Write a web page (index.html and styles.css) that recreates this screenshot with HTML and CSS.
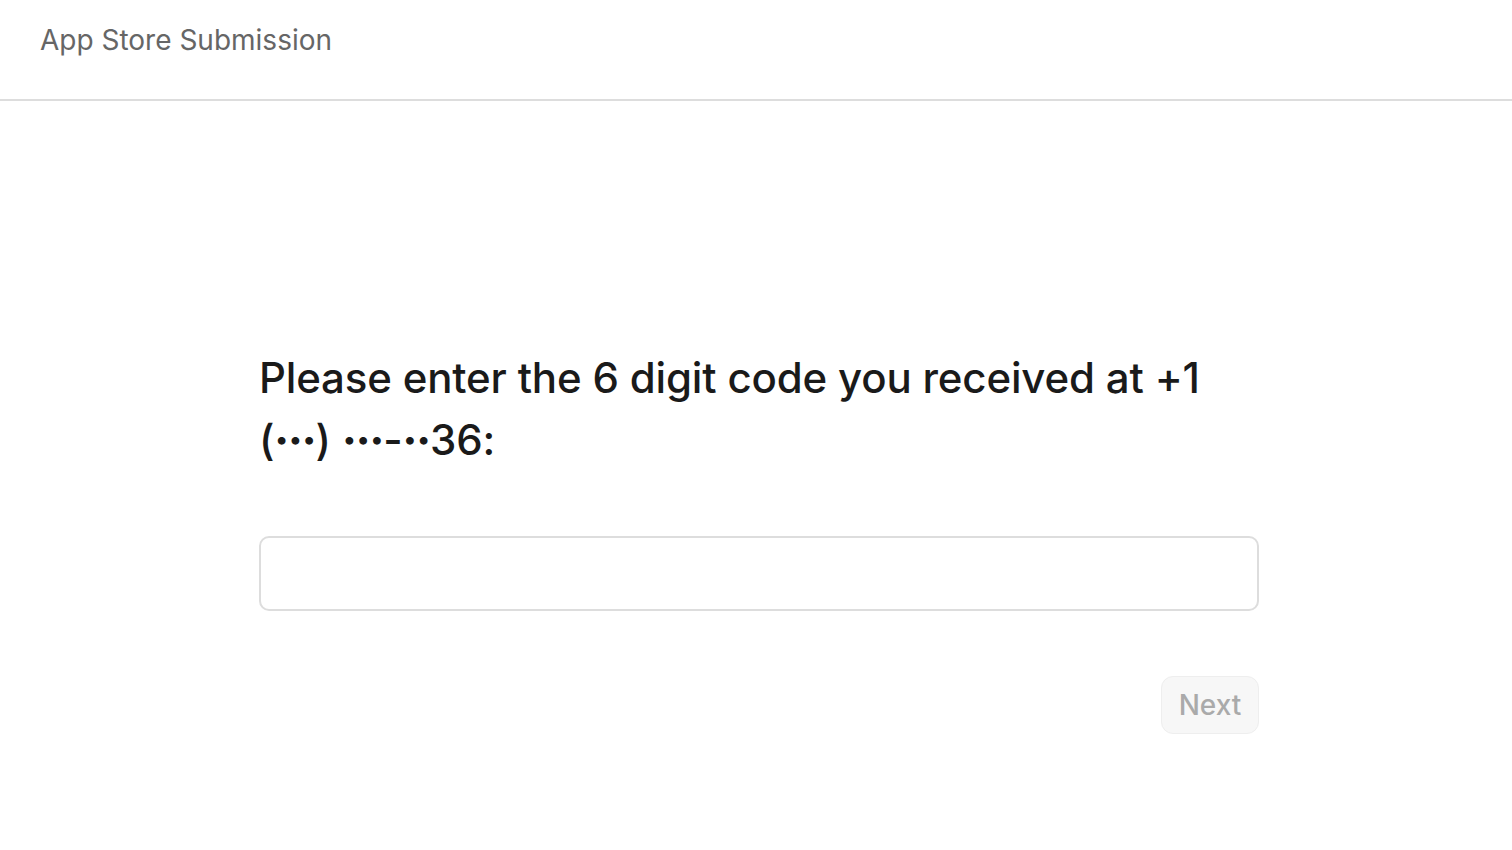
FILE: index.html
```html
<!DOCTYPE html>
<html lang="en">
<head>
<meta charset="utf-8">
<title>App Store Submission</title>
<link rel="stylesheet" href="styles.css">
</head>
<body>
<header class="topbar">
  <div class="title">App Store Submission</div>
</header>
<main class="main">
  <section class="panel">
    <h1 class="prompt">Please enter the 6 digit code you received at +1 (<span class="dots">···</span>) <span class="dots">···</span>-<span class="dots">··</span>36:</h1>
    <input class="code-input" type="text" aria-label="Code">
    <div class="actions">
      <button class="next-btn" type="button" disabled>Next</button>
    </div>
  </section>
</main>
</body>
</html>
```
FILE: styles.css
```css
* { box-sizing: border-box; }
html, body { margin: 0; padding: 0; background: #fff; }
body { font-family: Inter, "Noto Sans", sans-serif; color: #1a1a1a; }

.topbar {
  height: 101px;
  border-bottom: 2px solid #dddddd;
  padding: 22px 40px 0;
}
.title {
  font-size: 28px;
  color: #666666;
  line-height: 36px;
}

.main {
  padding-top: 246px;
}
.panel {
  width: 1000px;
  margin: 0 auto;
  transform: translateX(3px);
}
.prompt {
  margin: 0;
  font-size: 42px;
  font-weight: 500;
  line-height: 62px;
  letter-spacing: -0.004em;
  color: #1a1a1a;
  max-width: 980px;
}
.dots {
  font-weight: 800;
  letter-spacing: -0.025em;
}
.code-input {
  display: block;
  width: 1000px;
  height: 75px;
  margin-top: 65px;
  border: 2px solid #dddddd;
  border-radius: 10px;
  background: #fff;
  font-family: inherit;
  font-size: 28px;
  padding: 0 20px;
  outline: none;
}
.actions {
  display: flex;
  justify-content: flex-end;
  margin-top: 65px;
}
.next-btn {
  width: 98px;
  height: 58px;
  border: 1.5px solid #eeeeee;
  border-radius: 12px;
  background: #f7f7f7;
  color: #aaaaaa;
  font-family: inherit;
  font-size: 28px;
  font-weight: 500;
  padding: 0;
}
```
